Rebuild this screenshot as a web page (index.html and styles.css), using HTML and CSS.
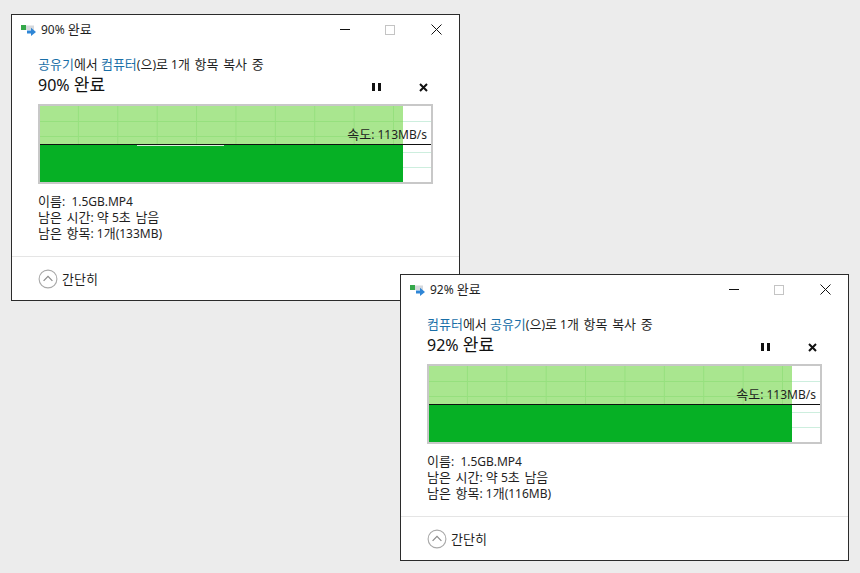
FILE: index.html
```html
<!DOCTYPE html>
<html lang="ko">
<head>
<meta charset="utf-8">
<title>복사 중</title>
<link rel="stylesheet" href="styles.css">
</head>
<body>
<svg class="defs" width="0" height="0" aria-hidden="true">
  <symbol id="copy" viewBox="0 0 16 12">
    <rect x="0" y="1" width="5" height="5" fill="#35a84a"/>
    <rect x="5" y="1.5" width="8" height="4.5" fill="#d5d8dc"/>
    <path d="M6 6.5h4V3.8l5 4.2-5 4V9.5H6z" fill="#2f86d6"/>
  </symbol>
  <symbol id="up" viewBox="0 0 20 20">
    <circle cx="10" cy="10" r="8.9" fill="none" stroke="#a9a9a9" stroke-width="1.1"/>
    <path d="M5.6 11.8 10 7.4l4.4 4.4" fill="none" stroke="#8a8a8a" stroke-width="1.2"/>
  </symbol>
</svg>

<section class="win win-a">
  <header class="titlebar">
    <svg class="app-icon"><use href="#copy"/></svg>
    <span class="title">90% <span class="ko">완료</span></span>
    <div class="controls">
      <span class="ctl-min"></span>
      <span class="ctl-max"></span>
      <svg class="ctl-close" viewBox="0 0 11 11"><path d="M.5.5l10 10M10.5.5l-10 10" stroke="#111" fill="none"/></svg>
    </div>
  </header>
  <div class="body">
    <p class="line"><a class="ko">공유기</a><span class="ko">에서</span> <a class="ko">컴퓨터</a>(<span class="ko">으</span>)<span class="ko">로</span> 1<span class="ko">개 항목 복사 중</span></p>
    <div class="headline">
      <span class="pct">90% <span class="ko">완료</span></span>
      <span class="pause"></span>
      <svg class="stop" viewBox="0 0 9 9"><path d="M1 1l7 7M8 1L1 8" stroke="#111" stroke-width="2" fill="none"/></svg>
    </div>
    <div class="chart">
      <div class="fill"></div>
      <div class="grid"></div>
      <div class="rate"></div>
      <div class="glint"></div>
      <span class="speed"><span class="ko">속도</span>: 113MB/s</span>
    </div>
    <ul class="info">
      <li><span class="ko">이름</span>:  1.5GB.MP4</li>
      <li><span class="ko">남은 시간</span>: <span class="ko">약</span> 5<span class="ko">초 남음</span></li>
      <li><span class="ko">남은 항목</span>: 1<span class="ko">개</span>(133MB)</li>
    </ul>
  </div>
  <footer class="foot">
    <svg class="up"><use href="#up"/></svg>
    <span class="ko">간단히</span>
  </footer>
</section>

<section class="win win-b">
  <header class="titlebar">
    <svg class="app-icon"><use href="#copy"/></svg>
    <span class="title">92% <span class="ko">완료</span></span>
    <div class="controls">
      <span class="ctl-min"></span>
      <span class="ctl-max"></span>
      <svg class="ctl-close" viewBox="0 0 11 11"><path d="M.5.5l10 10M10.5.5l-10 10" stroke="#111" fill="none"/></svg>
    </div>
  </header>
  <div class="body">
    <p class="line"><a class="ko">컴퓨터</a><span class="ko">에서</span> <a class="ko">공유기</a>(<span class="ko">으</span>)<span class="ko">로</span> 1<span class="ko">개 항목 복사 중</span></p>
    <div class="headline">
      <span class="pct">92% <span class="ko">완료</span></span>
      <span class="pause"></span>
      <svg class="stop" viewBox="0 0 9 9"><path d="M1 1l7 7M8 1L1 8" stroke="#111" stroke-width="2" fill="none"/></svg>
    </div>
    <div class="chart">
      <div class="fill"></div>
      <div class="grid"></div>
      <div class="rate"></div>
      <span class="speed"><span class="ko">속도</span>: 113MB/s</span>
    </div>
    <ul class="info">
      <li><span class="ko">이름</span>:  1.5GB.MP4</li>
      <li><span class="ko">남은 시간</span>: <span class="ko">약</span> 5<span class="ko">초 남음</span></li>
      <li><span class="ko">남은 항목</span>: 1<span class="ko">개</span>(116MB)</li>
    </ul>
  </div>
  <footer class="foot">
    <svg class="up"><use href="#up"/></svg>
    <span class="ko">간단히</span>
  </footer>
</section>
</body>
</html>
```

FILE: styles.css
```css
html, body {
  margin: 0;
  height: 100%;
}
body {
  position: relative;
  width: 860px;
  height: 573px;
  overflow: hidden;
  background: #ececec;
  font-family: "Noto Sans", "Noto Sans CJK KR", sans-serif;
  font-size: 12px;
  color: #1f1f1f;
}
.defs { position: absolute; }
.ko {
  font-family: "Noto Sans CJK KR", sans-serif;
  font-size: 13px;
  word-spacing: 1px;
}

.win {
  position: absolute;
  box-sizing: border-box;
  width: 449px;
  height: 287px;
  display: flex;
  flex-direction: column;
  background: #fff;
  border: 1px solid #2b2b2b;
}
.win-a { left: 11px; top: 14px; }
.win-b { left: 400px; top: 274px; }

.titlebar {
  height: 29px;
  display: flex;
  align-items: center;
  padding-left: 9px;
  flex: none;
}
.app-icon { width: 16px; height: 12px; margin-right: 4px; }
.title { line-height: 16px; }
.controls {
  margin-left: auto;
  display: flex;
  align-items: center;
  gap: 35px;
  padding-right: 17px;
}
.ctl-min { display: block; width: 10px; height: 1px; background: #111; }
.ctl-max { display: block; box-sizing: border-box; width: 10px; height: 10px; border: 1px solid #c4c4c4; }
.ctl-close { display: block; width: 11px; height: 11px; margin-left: 1px; }

.body {
  flex: none;
  padding: 11px 26px 0;
}
.line {
  margin: 0;
  height: 18px;
  line-height: 18px;
  white-space: nowrap;
}
.line a { color: #1a6fa8; }

.headline {
  height: 24px;
  display: flex;
  align-items: center;
}
.pct {
  font-size: 16px;
  line-height: 22px;
  padding-bottom: 2px;
  color: #111;
}
.pct .ko { font-size: 17px; }
.pause {
  box-sizing: border-box;
  width: 9px;
  height: 8px;
  margin: 4px 38px 0 auto;
  border-left: 3px solid #111;
  border-right: 3px solid #111;
}
.stop { width: 9px; height: 9px; margin: 4px 5px 0 0; }

.chart {
  position: relative;
  box-sizing: border-box;
  width: 395px;
  height: 80px;
  margin-top: 7px;
  border: 2px solid #c8c8c8;
  background: #fff;
  overflow: hidden;
}
.fill {
  position: absolute;
  z-index: 1;
  left: 0;
  top: 0;
  bottom: 0;
  width: 363px;
  background: linear-gradient(#a9e68f 0 38px, #06b025 38px);
}
.fill::before {
  content: "";
  position: absolute;
  left: 0;
  right: 0;
  top: 0;
  height: 38px;
  background-image:
    linear-gradient(#96e07e, #96e07e),
    linear-gradient(#96e07e, #96e07e),
    linear-gradient(to right, #96e07e 1px, transparent 1px);
  background-repeat: no-repeat, no-repeat, repeat;
  background-size: 100% 1px, 100% 1px, 39.4px 100%;
  background-position: 0 15px, 0 30px, -1.5px 0;
}
.grid {
  position: absolute;
  inset: 0;
  background-image:
    linear-gradient(#cdeede, #cdeede),
    linear-gradient(#cdeede, #cdeede),
    linear-gradient(#cdeede, #cdeede);
  background-repeat: no-repeat;
  background-size: 100% 1px;
  background-position: 0 15px, 0 46px, 0 61px;
}
.rate {
  position: absolute;
  z-index: 2;
  left: 0;
  right: 0;
  top: 38px;
  height: 1px;
  background: #111;
}
.glint {
  position: absolute;
  z-index: 2;
  left: 97px;
  width: 87px;
  top: 39px;
  height: 1px;
  background: #d9f0dc;
}
.speed {
  position: absolute;
  z-index: 3;
  right: 4px;
  top: 20px;
  line-height: 16px;
  white-space: nowrap;
}

.info {
  list-style: none;
  margin: 9px 0 0;
  padding: 0;
  line-height: 16px;
}
.info li { height: 16px; white-space: pre; }
.info .ko { display: inline-block; line-height: 16px; }
.foot {
  box-sizing: border-box;
  flex: 1;
  margin-top: 15px;
  border-top: 1px solid #e5e5e5;
  display: flex;
  align-items: center;
  padding-left: 26px;
  gap: 4px;
}
.up { width: 20px; height: 20px; }
```
